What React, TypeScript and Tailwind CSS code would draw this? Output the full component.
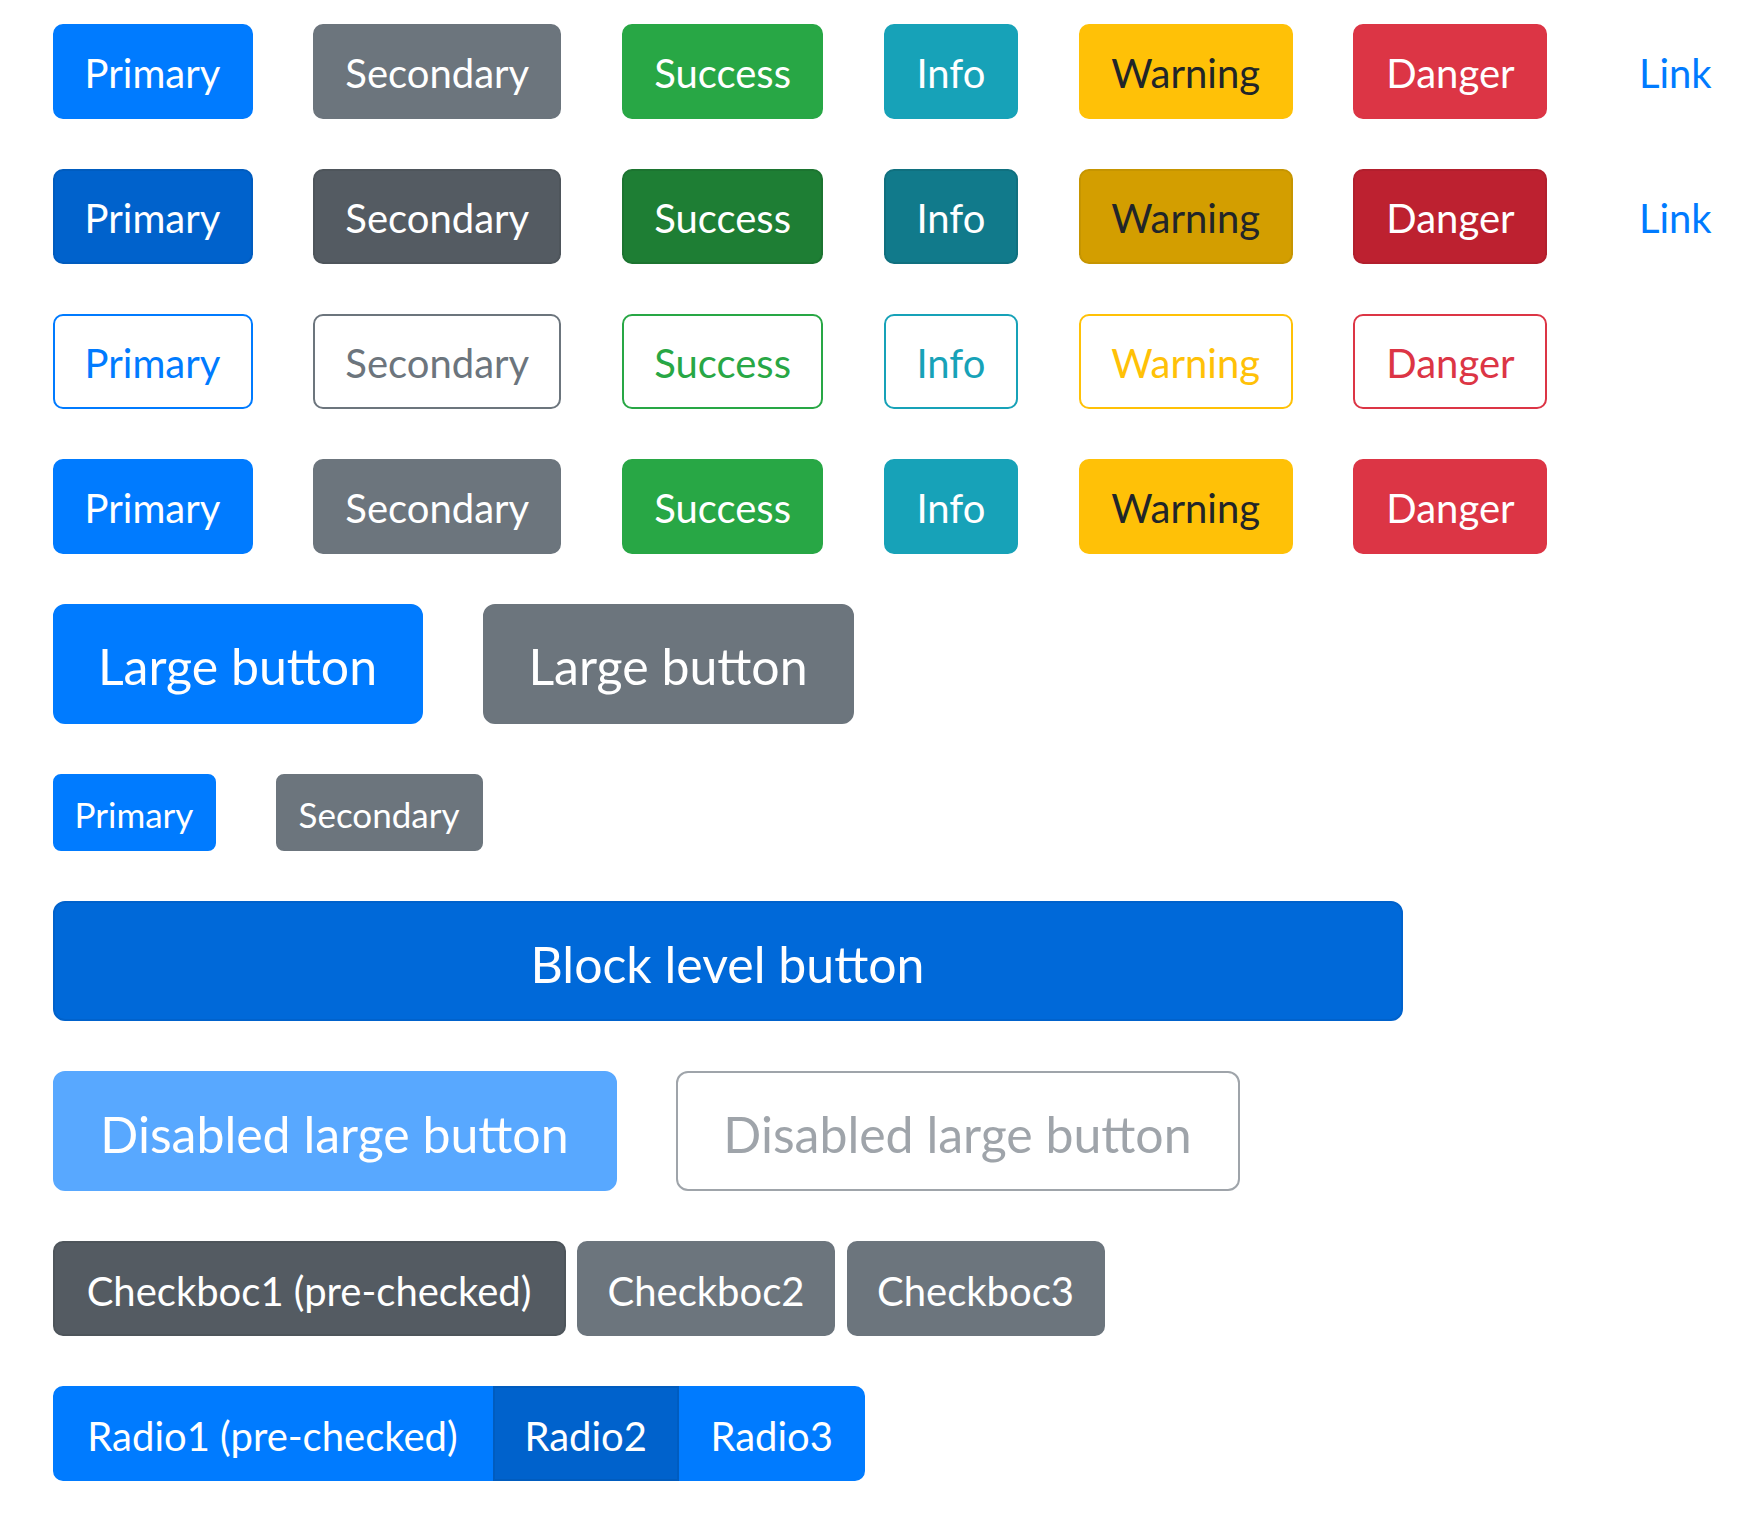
import React from "react";

const base =
  "inline-flex items-center justify-center whitespace-nowrap border-[2.5px] border-solid font-normal select-none shrink-0";
const md = "h-[95px] px-[30px] text-[40px] leading-[60px] rounded-[10px]";
const lg = "h-[120px] px-[40px] text-[50px] leading-[75px] rounded-[12px]";
const sm = "h-[77.5px] px-[20px] text-[35px] leading-[52.5px] rounded-[8px]";

const solid: Record<string, string> = {
  primary: "bg-[#007bff] border-[#007bff] text-white",
  secondary: "bg-[#6c757d] border-[#6c757d] text-white",
  success: "bg-[#28a745] border-[#28a745] text-white",
  info: "bg-[#17a2b8] border-[#17a2b8] text-white",
  warning: "bg-[#ffc107] border-[#ffc107] text-[#212529]",
  danger: "bg-[#dc3545] border-[#dc3545] text-white",
  link: "bg-transparent border-transparent text-[#007bff]",
};

const active: Record<string, string> = {
  primary: "bg-[#0062cc] border-[#005cbf] text-white",
  secondary: "bg-[#545b62] border-[#4e555b] text-white",
  success: "bg-[#1e7e34] border-[#1c7430] text-white",
  info: "bg-[#117a8b] border-[#10707f] text-white",
  warning: "bg-[#d39e00] border-[#c69500] text-[#212529]",
  danger: "bg-[#bd2130] border-[#b21f2d] text-white",
  link: "bg-transparent border-transparent text-[#007bff]",
};

const outline: Record<string, string> = {
  primary: "bg-white border-[#007bff] text-[#007bff]",
  secondary: "bg-white border-[#6c757d] text-[#6c757d]",
  success: "bg-white border-[#28a745] text-[#28a745]",
  info: "bg-white border-[#17a2b8] text-[#17a2b8]",
  warning: "bg-white border-[#ffc107] text-[#ffc107]",
  danger: "bg-white border-[#dc3545] text-[#dc3545]",
};

const widths: Record<string, string> = {
  primary: "w-[200px]",
  secondary: "w-[248px]",
  success: "w-[201px]",
  info: "w-[134px]",
  warning: "w-[214px]",
  danger: "w-[194px]",
  link: "w-[134px]",
};

const labels: [string, string][] = [
  ["primary", "Primary"],
  ["secondary", "Secondary"],
  ["success", "Success"],
  ["info", "Info"],
  ["warning", "Warning"],
  ["danger", "Danger"],
];

function T({ children }: { children: React.ReactNode }) {
  return <span className="translate-y-[0.06em]">{children}</span>;
}

function Row({ children, gap = "gap-[60.8px]" }: { children: React.ReactNode; gap?: string }) {
  return <div className={`flex items-start ${gap}`}>{children}</div>;
}

export default function App() {
  return (
    <div
      className="min-h-screen bg-white pl-[52.5px] pt-[23.5px] flex flex-col gap-[50px]"
      style={{ fontFamily: '"Lato", "Segoe UI", sans-serif' }}
    >
      <Row>
        {labels.map(([k, l]) => (
          <button key={k} className={`${base} ${md} ${widths[k]} ${solid[k]}`}><T>{l}</T></button>
        ))}
        <button className={`${base} ${md} ${widths.link} ${solid.link}`}><T>Link</T></button>
      </Row>
      <Row>
        {labels.map(([k, l]) => (
          <button key={k} className={`${base} ${md} ${widths[k]} ${active[k]}`}><T>{l}</T></button>
        ))}
        <button className={`${base} ${md} ${widths.link} ${active.link}`}><T>Link</T></button>
      </Row>
      <Row>
        {labels.map(([k, l]) => (
          <button key={k} className={`${base} ${md} ${widths[k]} ${outline[k]}`}><T>{l}</T></button>
        ))}
      </Row>
      <Row>
        {labels.map(([k, l]) => (
          <button key={k} className={`${base} ${md} ${widths[k]} ${solid[k]}`}><T>{l}</T></button>
        ))}
      </Row>
      <Row gap="gap-[60px]">
        <button className={`${base} ${lg} w-[370px] ${solid.primary}`}><T>Large button</T></button>
        <button className={`${base} ${lg} w-[371px] ${solid.secondary}`}><T>Large button</T></button>
      </Row>
      <Row gap="gap-[60px]">
        <button className={`${base} ${sm} w-[163px] ${solid.primary}`}><T>Primary</T></button>
        <button className={`${base} ${sm} w-[207px] ${solid.secondary}`}><T>Secondary</T></button>
      </Row>
      <div className="w-[1350px]">
        <button className={`${base} ${lg} w-full bg-[#0069d9] border-[#0062cc] text-white`}>
          <T>Block level button</T>
        </button>
      </div>
      <Row gap="gap-[59px]">
        <button className={`${base} ${lg} w-[564px] bg-[#007bff] border-[#007bff] text-white opacity-65`}>
          <T>Disabled large button</T>
        </button>
        <button className={`${base} ${lg} w-[564px] bg-white border-[#6c757d] text-[#6c757d] opacity-65`}>
          <T>Disabled large button</T>
        </button>
      </Row>
      <Row gap="gap-[11.5px]">
        <button className={`${base} ${md} w-[513px] ${active.secondary}`}><T>Checkboc1 (pre-checked)</T></button>
        <button className={`${base} ${md} w-[258px] ${solid.secondary}`}><T>Checkboc2</T></button>
        <button className={`${base} ${md} w-[258px] ${solid.secondary}`}><T>Checkboc3</T></button>
      </Row>
      <div className="flex items-start">
        <button className={`${base} h-[95px] w-[440px] px-[30px] text-[40px] leading-[60px] rounded-l-[10px] rounded-r-none ${solid.primary}`}>
          <T>Radio1 (pre-checked)</T>
        </button>
        <button className={`${base} h-[95px] w-[186.5px] px-[30px] text-[40px] leading-[60px] rounded-none ${active.primary}`}>
          <T>Radio2</T>
        </button>
        <button className={`${base} h-[95px] w-[185.5px] px-[30px] text-[40px] leading-[60px] rounded-r-[10px] rounded-l-none ${solid.primary}`}>
          <T>Radio3</T>
        </button>
      </div>
    </div>
  );
}
